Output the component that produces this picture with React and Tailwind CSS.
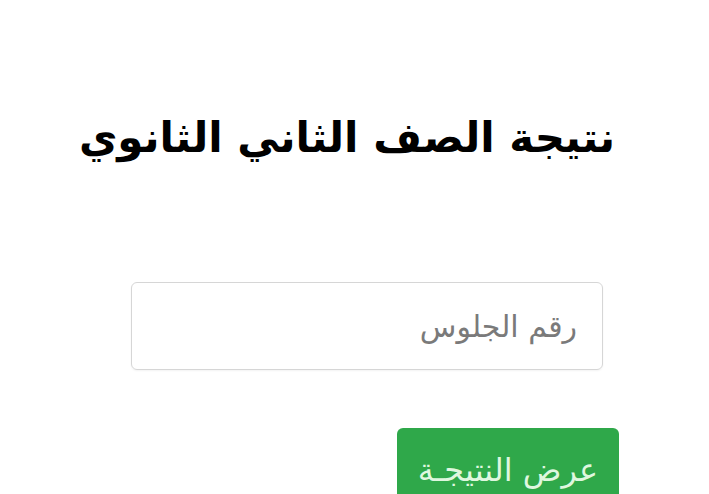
import React from 'react';

export default function App() {
  return (
    <div dir="rtl" className="w-full h-[494px] bg-white overflow-hidden flex flex-col" style={{ fontFamily: '"DejaVu Sans", sans-serif' }}>
      <h1 className="shrink-0 mt-[102px] h-[72px] flex items-center justify-center text-[42px] font-bold text-black leading-none pr-[15px]">
        نتيجة الصف الثاني الثانوي
      </h1>

      <div className="shrink-0 mt-[108px] mr-[106px] w-[472px] h-[88px] rounded-md border border-[#d6d6d6] shadow-[0_1px_2px_rgba(0,0,0,0.05)] flex items-center pr-[25px] text-[30px] text-[#7a7a7a]">
        رقم الجلوس
      </div>

      <button className="shrink-0 mt-[58px] mr-[90px] w-[222px] h-[80px] rounded-md bg-[#2fa84a] text-[#dff7df] text-[32px] flex items-start justify-center pt-[18px]">
        عرض النتيجـة
      </button>
    </div>
  );
}
